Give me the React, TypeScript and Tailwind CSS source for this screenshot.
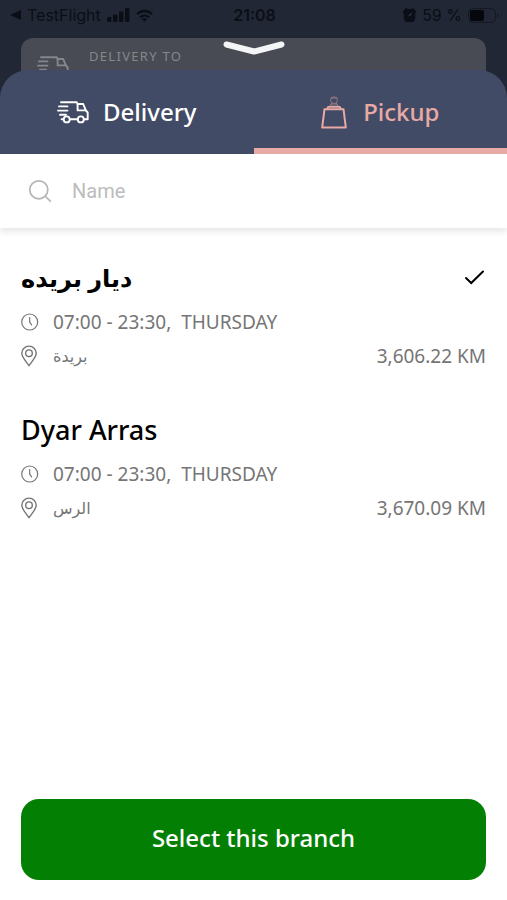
import { useState } from "react";

// ── Icons ──────────────────────────────────────────────────────────────────

function TruckIcon({ className }: { className?: string }) {
  return (
    <svg
      viewBox="0 0 32 23"
      className={className}
      fill="none"
      stroke="currentColor"
      strokeWidth="1.9"
      strokeLinecap="round"
      strokeLinejoin="round"
      aria-hidden="true"
    >
      <path d="M4 1.3H19.8L20.6 3H26.2L28.8 9.4L30.7 11.5V18.2H27.2" />
      <path d="M20.6 3V9.4H28.8" />
      <path d="M2 5.4H10.5M1 9.6H10.5M3 13.8H9M4.6 18.2H6.2M13.2 18.2H20.4" />
      <circle cx="9.7" cy="18.4" r="3" />
      <circle cx="23.8" cy="18.4" r="3" />
    </svg>
  );
}

function BagIcon({ className }: { className?: string }) {
  return (
    <svg viewBox="0 0 26 33" className={className} fill="none" stroke="currentColor" aria-hidden="true">
      <path d="M3.5 13.2H22.5L24.8 31.4H1.2Z" strokeWidth="2" strokeLinejoin="round" />
      <path d="M6 13L7.2 10.8H18.8L20 13" strokeWidth="1.8" />
      <g strokeWidth="1" opacity="0.5">
        <path d="M8.8 10.3L10.7 6.8C8.8 4.3 9.6 1 13 1C16.4 1 17.2 4.3 15.3 6.8L17.2 10.3" />
        <path d="M9.5 2H16.5M10.4 7.3H15.6M9 9H17" />
      </g>
    </svg>
  );
}

function ClockIcon() {
  return (
    <svg viewBox="0 0 18 18" className="size-[18px]" fill="none" stroke="currentColor" strokeLinecap="round" aria-hidden="true">
      <circle cx="8.7" cy="9" r="8" strokeWidth="1.2" />
      <path d="M8.7 4.7V9.2L10.7 12" strokeWidth="1.2" />
    </svg>
  );
}

function PinIcon() {
  return (
    <svg viewBox="0 0 18 22" className="h-[22px] w-[18px]" fill="none" stroke="currentColor" strokeWidth="1.4" aria-hidden="true">
      <path d="M8 20.6C5.4 17 .8 12.3 .8 8.3C.8 4.2 4 1.1 8 1.1S15.2 4.2 15.2 8.3C15.2 12.3 10.6 17 8 20.6Z" />
      <circle cx="8" cy="8.2" r="3.3" />
    </svg>
  );
}

function SearchIcon() {
  return (
    <svg viewBox="0 0 24 24" className="size-6" fill="none" stroke="currentColor" strokeWidth="1.7" strokeLinecap="round" aria-hidden="true">
      <circle cx="10.8" cy="10.8" r="9" />
      <path d="M17.5 17.5L22.3 22.2" />
    </svg>
  );
}

// ── Status bar ─────────────────────────────────────────────────────────────

function StatusBar() {
  return (
    <div className="grid h-[30px] grid-cols-3 items-center pr-2 pl-2.5 font-['Inter','Liberation_Sans',sans-serif] text-base text-[#0b0e16]">
      <div className="flex items-center gap-1.5">
        <svg viewBox="0 0 11 10" className="h-2.5 w-[11px] shrink-0" fill="currentColor" aria-hidden="true">
          <path d="M0 5L11 0V10Z" />
        </svg>
        <span>TestFlight</span>
        <svg viewBox="0 0 23 14" className="h-3.5 w-[23px] shrink-0" fill="currentColor" aria-hidden="true">
          <rect x="0" y="9" width="4.4" height="5" rx="1" />
          <rect x="6" y="6.5" width="4.4" height="7.5" rx="1" />
          <rect x="12" y="3.5" width="4.4" height="10.5" rx="1" />
          <rect x="18" y="0" width="4.4" height="14" rx="1" />
        </svg>
        <svg viewBox="0 0 17 13" className="h-[13px] w-[17px] shrink-0" fill="none" stroke="currentColor" strokeWidth="2.4" aria-hidden="true">
          <path d="M1 5C5.3 .9 11.7 .9 16 5M4 8.3C6.6 6 10.4 6 13 8.3" />
          <path d="M8.5 12.8L5.9 10.2C7.4 8.9 9.6 8.9 11.1 10.2Z" fill="currentColor" stroke="none" />
        </svg>
      </div>
      <div className="text-center font-semibold">21:08</div>
      <div className="flex items-center justify-end gap-1.5">
        <svg viewBox="0 0 13 14" className="h-3.5 w-[13px] shrink-0" aria-hidden="true">
          <path d="M3 0L0 3V5L1 6C0 11 2 13 3 14H10C12 12 13 10 12 6L13 4V3L10 0L8 1H5Z" fill="currentColor" />
          <path d="M6 8L8.5 5.5" stroke="#303746" strokeWidth="1.2" fill="none" />
        </svg>
        <span>59 %</span>
        <svg viewBox="0 0 31 15" className="h-[15px] w-[31px] shrink-0" aria-hidden="true">
          <rect x=".6" y=".6" width="26.8" height="13.8" rx="4" fill="none" stroke="#141923" />
          <rect x="2" y="2" width="14" height="11" rx="2" fill="#05070c" />
          <path d="M29 5V10C31 9 31 6 29 5Z" fill="#141923" />
        </svg>
      </div>
    </div>
  );
}

// ── Branch row ─────────────────────────────────────────────────────────────

type Branch = {
  id: number;
  name: string;
  city: string;
  hours: string;
  day: string;
  distance: string;
};

const branches: Branch[] = [
  { id: 1, name: "ديار بريده", city: "بريدة", hours: "07:00 - 23:30,", day: "THURSDAY", distance: "3,606.22 KM" },
  { id: 2, name: "Dyar Arras", city: "الرس", hours: "07:00 - 23:30,", day: "THURSDAY", distance: "3,670.09 KM" },
];

const isArabic = (text: string) => /[\u0600-\u06ff]/.test(text);

function BranchRow({
  branch,
  selected,
  onSelect,
}: {
  branch: Branch;
  selected: boolean;
  onSelect: () => void;
}) {
  return (
    <li>
      <button type="button" onClick={onSelect} aria-pressed={selected} className="block w-full text-left">
        <span className="flex h-10 items-center justify-between">
          <span
            className={
              isArabic(branch.name)
                ? "text-2xl font-bold text-black"
                : "text-[27px] font-medium text-black"
            }
          >
            {branch.name}
          </span>
          {selected && (
            <svg viewBox="0 0 22 16" className="h-4 w-[22px]" fill="none" stroke="#000" strokeWidth="2" strokeLinecap="round" aria-hidden="true">
              <path d="M2 8L7.2 13L19 1.5" />
            </svg>
          )}
        </span>
        <span className="mt-2 flex h-8 items-center gap-3.5 text-[19px] text-[#757575]">
          <ClockIcon />
          <span className="flex gap-2.5">
            <span>{branch.hours}</span>
            <span>{branch.day}</span>
          </span>
        </span>
        <span className="flex h-9 items-center gap-3.5 text-[19px] text-[#757575]">
          <PinIcon />
          <span className="flex-1 text-base">{branch.city}</span>
          <span>{branch.distance}</span>
        </span>
      </button>
    </li>
  );
}

// ── Screen ─────────────────────────────────────────────────────────────────

export default function App() {
  const [tab, setTab] = useState<"delivery" | "pickup">("pickup");
  const [selectedId, setSelectedId] = useState(1);
  const [query, setQuery] = useState("");

  const visible = branches.filter((b) => b.name.toLowerCase().includes(query.toLowerCase()));

  return (
    <div className="flex min-h-screen flex-col bg-[#212735] font-['Noto_Sans','DejaVu_Sans',sans-serif]">
      <StatusBar />

      {/* Dimmed page behind the sheet */}
      <div className="relative mx-[21px] mt-2 flex h-14 gap-5 rounded-xl bg-[#484b54] pt-2 pl-4 text-[#85878c]">
        <TruckIcon className="mt-2.5 h-[23px] w-8" />
        <span className="text-[13px] leading-5 tracking-widest">DELIVERY TO</span>
        <svg
          viewBox="0 0 62 16"
          className="absolute top-0.5 left-1/2 h-4 w-[62px] -translate-x-1/2"
          fill="none"
          stroke="#f4f5f7"
          strokeWidth="6"
          strokeLinecap="round"
          strokeLinejoin="round"
          aria-hidden="true"
        >
          <path d="M3.5 4.5L31 11.5L58.5 4.5" />
        </svg>
      </div>

      {/* Sheet */}
      <div className="relative -mt-6 flex flex-1 flex-col">
        <div role="tablist" className="grid grid-cols-2 rounded-t-[28px] bg-[#424b66] text-2xl font-medium">
          <button
            type="button"
            role="tab"
            aria-selected={tab === "delivery"}
            onClick={() => setTab("delivery")}
            className={
              tab === "delivery"
                ? "flex h-[84px] items-center justify-center gap-3.5 border-b-[6px] border-[#e7aaa5] pt-1.5 text-[#e7aaa5]"
                : "flex h-[84px] items-center justify-center gap-3.5 border-b-[6px] border-transparent pt-1.5 text-white"
            }
          >
            <TruckIcon className="h-[23px] w-8" />
            Delivery
          </button>
          <button
            type="button"
            role="tab"
            aria-selected={tab === "pickup"}
            onClick={() => setTab("pickup")}
            className={
              tab === "pickup"
                ? "flex h-[84px] items-center justify-center gap-4 border-b-[6px] border-[#e7aaa5] pt-1.5 text-[#e7aaa5]"
                : "flex h-[84px] items-center justify-center gap-4 border-b-[6px] border-transparent pt-1.5 text-white"
            }
          >
            <BagIcon className="h-[33px] w-[26px]" />
            Pickup
          </button>
        </div>

        <div className="flex flex-1 flex-col bg-white">
          <label className="flex h-[74px] items-center gap-5 px-7 text-[#b5b5b5] shadow-[0_4px_6px_rgba(0,0,0,0.09)]">
            <SearchIcon />
            <input
              type="text"
              aria-label="Name"
              placeholder="Name"
              value={query}
              onChange={(e) => setQuery(e.target.value)}
              className="min-w-0 flex-1 bg-transparent font-['Roboto','Liberation_Sans',sans-serif] text-xl text-black outline-none placeholder:text-[#bcbcbc]"
            />
          </label>

          <ul className="flex flex-1 flex-col gap-9 px-[21px] pt-[30px]">
            {visible.map((branch) => (
              <BranchRow
                key={branch.id}
                branch={branch}
                selected={branch.id === selectedId}
                onSelect={() => setSelectedId(branch.id)}
              />
            ))}
          </ul>

          <div className="px-[21px] pb-5">
            <button type="button" className="h-[81px] w-full rounded-[18px] bg-[#038003] pb-1 text-2xl font-medium text-white">
              Select this branch
            </button>
          </div>
        </div>
      </div>
    </div>
  );
}
